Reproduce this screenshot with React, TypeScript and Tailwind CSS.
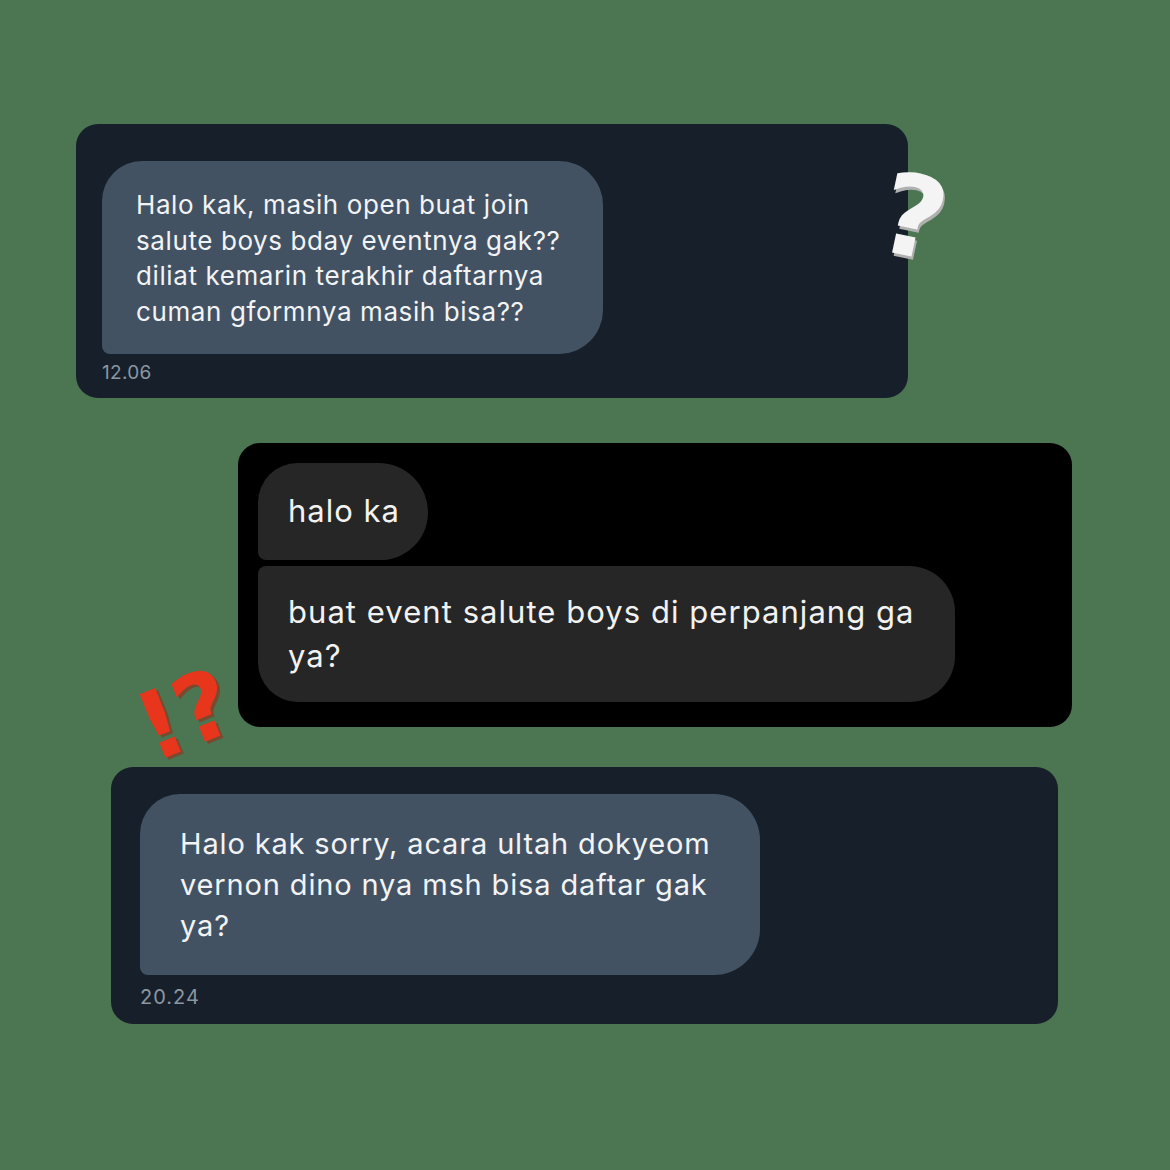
import React from "react";

const font = { fontFamily: "Inter, 'Liberation Sans', sans-serif" };

function Lines({ lines }: { lines: string[] }) {
  return (
    <>
      {lines.map((l, i) => (
        <div key={i} className="whitespace-nowrap">
          {l}
        </div>
      ))}
    </>
  );
}

export default function App() {
  return (
    <div
      className="w-[1170px] h-[1170px] bg-[#4b7651] overflow-hidden flex flex-col"
      style={font}
    >
      {/* first chat */}
      <div className="relative mt-[124px] ml-[76px] w-[832px] h-[274px] rounded-[22px] bg-[#17202a] pt-[37px] pl-[26px]">
        <div className="w-[501px] h-[193px] rounded-tl-[40px] rounded-tr-[44px] rounded-br-[44px] rounded-bl-[8px] bg-[#425263] pl-[34px] pt-[26px] text-[26px] leading-[35.5px] tracking-[0.6px] text-[#f2f3f4]">
          <Lines
            lines={[
              "Halo kak, masih open buat join",
              "salute boys bday eventnya gak??",
              "diliat kemarin terakhir daftarnya",
              "cuman gformnya masih bisa??",
            ]}
          />
        </div>
        <div className="mt-[8px] text-[19px] leading-[22px] tracking-[0.3px] text-[#8b97a3]">12.06</div>
        <span
          className="absolute left-[805px] top-[37px] rotate-[12deg] text-[112px] font-black leading-none text-[#f4f4f4]"
          style={{
            fontFamily: "'DejaVu Sans', sans-serif",
            textShadow: "2px 3px 0 #b0b0b0",
          }}
        >
          ?
        </span>
      </div>

      {/* second chat */}
      <div className="mt-[45px] ml-[238px] w-[834px] h-[284px] rounded-[22px] bg-black pt-[20px] pl-[20px] flex flex-col gap-[6px]">
        <div className="w-[170px] h-[97px] flex items-center pl-[30px] rounded-tl-[40px] rounded-tr-[50px] rounded-br-[48px] rounded-bl-[8px] bg-[#262626] text-[31px] tracking-[1px] text-[#f2f2f2]">
          halo ka
        </div>
        <div className="w-[697px] h-[136px] pl-[30px] pt-[24px] rounded-tl-[8px] rounded-tr-[46px] rounded-br-[46px] rounded-bl-[40px] bg-[#262626] text-[31px] leading-[44px] tracking-[1.05px] text-[#f2f2f2]">
          <Lines lines={["buat event salute boys di perpanjang ga", "ya?"]} />
        </div>
      </div>

      {/* third chat */}
      <div className="relative mt-[40px] ml-[111px] w-[947px] h-[257px] rounded-[22px] bg-[#17202a] pt-[27px] pl-[29px]">
        <span
          className="absolute left-[27px] top-[-98px] -rotate-[22deg] text-[94px] font-black leading-none text-[#e8361c] tracking-[-3px]"
          style={{
            fontFamily: "'DejaVu Sans', sans-serif",
            textShadow: "2px 3px 0 #7a4a30",
          }}
        >
          !?
        </span>
        <div className="w-[620px] h-[181px] rounded-tl-[40px] rounded-tr-[46px] rounded-br-[46px] rounded-bl-[8px] bg-[#425263] pl-[40px] pt-[29px] text-[29px] leading-[41px] tracking-[0.85px] text-[#f2f3f4]">
          <Lines
            lines={[
              "Halo kak sorry, acara ultah dokyeom",
              "vernon dino nya msh bisa daftar gak",
              "ya?",
            ]}
          />
        </div>
        <div className="mt-[11px] text-[20px] leading-[22px] tracking-[1px] text-[#8b97a3]">20.24</div>
      </div>
    </div>
  );
}
